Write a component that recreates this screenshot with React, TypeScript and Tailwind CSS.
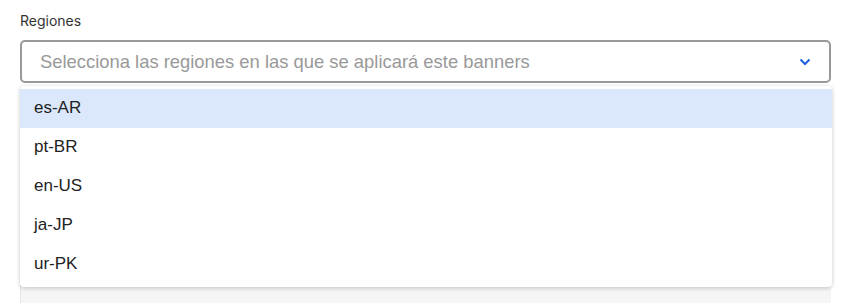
import React from 'react';

const regions = ['es-AR', 'pt-BR', 'en-US', 'ja-JP', 'ur-PK'];

const App = () => {
  return (
    <div className="w-[848px] h-[304px] overflow-hidden bg-white px-5 pt-[11px]" style={{ fontFamily: '"Liberation Sans", Arial, sans-serif' }}>
      <label className="block text-[14px] leading-[20px] text-[#333] mb-[9px]" style={{ fontFamily: 'Inter, "Liberation Sans", sans-serif' }}>
        Regiones
      </label>

      <div className="relative">
        <div className="flex items-center justify-between h-[43px] w-[811px] border-2 border-[#999] rounded-[5px] pl-[18px] pr-[16px] bg-white">
          <span className="text-[18.4px] text-[#999]">
            Selecciona las regiones en las que se aplicará este banners
          </span>
          <svg width="12" height="8" viewBox="0 0 12 8" fill="none" className="mr-[2px]">
            <path d="M1.5 1.5 L6 6 L10.5 1.5" stroke="#1f5fe0" strokeWidth="2" />
          </svg>
        </div>

        <div className="w-[811px] h-[160px] mt-[60px] bg-gradient-to-b from-[#ebebeb] to-[#f6f6f6] border-l border-[#e4e4e4]" />

        <ul className="absolute left-0 top-[46px] w-[812px] bg-white rounded-[4px] pt-[3px] pb-[3px] shadow-[0_1px_4px_rgba(0,0,0,0.22)] z-10">
          {regions.map((r, i) => (
            <li
              key={r}
              className={`h-[39px] flex items-center pl-[14px] pb-[2px] text-[17px] text-[#222] ${i === 0 ? 'bg-[#dbe8fb]' : ''}`}
            >
              {r}
            </li>
          ))}
        </ul>
      </div>
    </div>
  );
};

export default App;
